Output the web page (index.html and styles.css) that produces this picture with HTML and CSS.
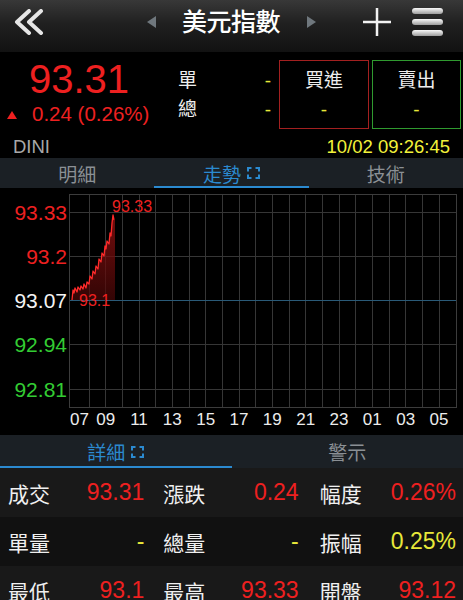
FILE: index.html
```html
<!DOCTYPE html>
<html lang="zh-Hant">
<head>
  <meta charset="UTF-8">
  <meta name="viewport" content="width=device-width, initial-scale=1.0">
  <title>美元指數</title>
  <link rel="stylesheet" href="styles.css">
</head>
<body>
  <header class="topbar">
    <svg class="back-icon" width="32" height="26" viewBox="0 0 32 26">
      <path d="M16 2L4 13L16 24M28 2L16 13L28 24"/>
    </svg>
    <div class="title-group">
      <span class="tri tri-left"></span>
      <h1 class="title">美元指數</h1>
      <span class="tri tri-right"></span>
    </div>
    <div class="actions">
      <svg class="plus-icon" width="28" height="28" viewBox="0 0 28 28">
        <path d="M14 0V28M0 14H28"/>
      </svg>
      <svg class="menu-icon" width="31" height="28" viewBox="0 0 31 28">
        <defs>
          <linearGradient id="barGrad" x1="0" y1="0" x2="0" y2="1">
            <stop offset="0" stop-color="#fafafa"/>
            <stop offset="1" stop-color="#9c9c9c"/>
          </linearGradient>
        </defs>
        <rect x="0" y="0" width="31" height="6" rx="3"/>
        <rect x="0" y="11" width="31" height="6" rx="3"/>
        <rect x="0" y="22" width="31" height="6" rx="3"/>
      </svg>
    </div>
  </header>

  <section class="quote">
    <div class="quote-main">
      <div class="price-block">
        <div class="price">93.31</div>
        <div class="change"><span class="up-tri"></span>0.24 (0.26%)</div>
      </div>
      <div class="vol-block">
        <div class="vol-row"><span>單</span><span class="dash">-</span></div>
        <div class="vol-row"><span>總</span><span class="dash">-</span></div>
      </div>
      <div class="order-box buy">
        <div>買進</div>
        <div class="dash">-</div>
      </div>
      <div class="order-box sell">
        <div>賣出</div>
        <div class="dash">-</div>
      </div>
    </div>
    <div class="quote-info">
      <span class="code">DINI</span>
      <span class="time">10/02 09:26:45</span>
    </div>
  </section>

  <nav class="tabs chart-tabs">
    <div class="tab">明細</div>
    <div class="tab active">走勢
      <svg class="expand" width="13" height="12" viewBox="0 0 13 12"><path d="M1 4.5V1H4.5M8.5 1H12V4.5M12 7.5V11H8.5M4.5 11H1V7.5"/></svg>
    </div>
    <div class="tab">技術</div>
  </nav>

  <div class="chart-wrap">
    <svg class="chart" width="463" height="247" viewBox="0 0 463 247">
      <defs>
        <linearGradient id="areaGrad" x1="0" y1="0" x2="0" y2="1">
          <stop offset="0" stop-color="#9a1212" stop-opacity="0.75"/>
          <stop offset="1" stop-color="#4a0707" stop-opacity="0.7"/>
        </linearGradient>
      </defs>
      <!-- grid -->
      <path class="grid" d="M89.5 6V219M105.5 6V219M122.5 6V219M139.5 6V219M155.5 6V219M172.5 6V219M189.5 6V219M205.5 6V219M222.5 6V219M239.5 6V219M255.5 6V219M272.5 6V219M289.5 6V219M305.5 6V219M322.5 6V219M339.5 6V219M355.5 6V219M372.5 6V219M389.5 6V219M405.5 6V219M422.5 6V219M439.5 6V219"/>
      <path class="grid" d="M69 24.5H456M69 68.5H456M69 156.5H456M69 201.5H456"/>
      <path class="base" d="M69 112.5H456"/>
      <rect class="frame" x="69.5" y="6.5" width="387" height="213"/>

      <!-- price line -->
      <path class="area" d="M72 112L73 102L74 105L75 100L77 104L78 99L80 102L81 98L83 101L84 96L86 100L87 94L89 96L90 88L92 91L93 83L95 86L96 78L98 81L99 71L101 74L102 65L104 68L105 58L106 61L107 53L109 56L110 45L111 48L112 35L113 27L114 32L115 32L115 112Z"/>
      <path class="line" d="M72 112L73 102L74 105L75 100L77 104L78 99L80 102L81 98L83 101L84 96L86 100L87 94L89 96L90 88L92 91L93 83L95 86L96 78L98 81L99 71L101 74L102 65L104 68L105 58L106 61L107 53L109 56L110 45L111 48L112 35L113 27L114 32"/>
      <text class="mark" x="112" y="24">93.33</text>
      <text class="mark" x="79" y="118">93.1</text>

      <!-- y axis -->
      <text class="ylab up" x="67" y="31.5">93.33</text>
      <text class="ylab up" x="67" y="75.5">93.2</text>
      <text class="ylab flat" x="67" y="119.5">93.07</text>
      <text class="ylab down" x="67" y="163.5">92.94</text>
      <text class="ylab down" x="67" y="208.5">92.81</text>

      <!-- x axis -->
      <text class="xlab first" x="70" y="237">07</text>
      <text class="xlab" x="105.7" y="237">09</text>
      <text class="xlab" x="139" y="237">11</text>
      <text class="xlab" x="172.3" y="237">13</text>
      <text class="xlab" x="205.7" y="237">15</text>
      <text class="xlab" x="239" y="237">17</text>
      <text class="xlab" x="272.3" y="237">19</text>
      <text class="xlab" x="305.7" y="237">21</text>
      <text class="xlab" x="339" y="237">23</text>
      <text class="xlab" x="372.3" y="237">01</text>
      <text class="xlab" x="405.7" y="237">03</text>
      <text class="xlab" x="439" y="237">05</text>
    </svg>
  </div>

  <nav class="tabs detail-tabs">
    <div class="tab active">詳細
      <svg class="expand" width="13" height="12" viewBox="0 0 13 12"><path d="M1 4.5V1H4.5M8.5 1H12V4.5M12 7.5V11H8.5M4.5 11H1V7.5"/></svg>
    </div>
    <div class="tab">警示</div>
  </nav>

  <div class="details">
    <div class="detail-row">
      <div class="cell"><span>成交</span><span class="val up">93.31</span></div>
      <div class="cell"><span>漲跌</span><span class="val up">0.24</span></div>
      <div class="cell"><span>幅度</span><span class="val up">0.26%</span></div>
    </div>
    <div class="detail-row">
      <div class="cell"><span>單量</span><span class="val hl">-</span></div>
      <div class="cell"><span>總量</span><span class="val hl">-</span></div>
      <div class="cell"><span>振幅</span><span class="val hl">0.25%</span></div>
    </div>
    <div class="detail-row">
      <div class="cell"><span>最低</span><span class="val up">93.1</span></div>
      <div class="cell"><span>最高</span><span class="val up">93.33</span></div>
      <div class="cell"><span>開盤</span><span class="val up">93.12</span></div>
    </div>
  </div>
</body>
</html>
```

FILE: styles.css
```css
* {
  box-sizing: border-box;
}

body {
  margin: 0;
  width: 463px;
  height: 600px;
  overflow: hidden;
  background: #000;
  color: #eee;
  font-family: "Liberation Sans", "Noto Sans CJK TC", sans-serif;
}

/* top bar */
.topbar {
  height: 53px;
  display: grid;
  grid-template-columns: 1fr auto 1fr;
  align-items: center;
  padding-bottom: 8px;
  background: linear-gradient(#383838 0%, #202020 45%, #121212 100%);
  border-bottom: 1px solid #000;
}

.back-icon {
  justify-self: start;
  margin-left: 13px;
}

.back-icon path {
  fill: none;
  stroke: #e6e6e6;
  stroke-width: 4;
  stroke-linecap: round;
  stroke-linejoin: round;
}

.title-group {
  display: flex;
  align-items: center;
}

.tri {
  width: 0;
  height: 0;
  border-top: 6.5px solid transparent;
  border-bottom: 6.5px solid transparent;
}

.tri-left {
  border-right: 9px solid #6f777d;
  margin-right: 26px;
}

.tri-right {
  border-left: 9px solid #6f777d;
  margin-left: 27px;
}

.title {
  margin: 0;
  font-size: 25px;
  font-weight: 500;
  line-height: 30px;
  letter-spacing: -0.5px;
  color: #fff;
}

.actions {
  justify-self: end;
  display: flex;
  align-items: center;
  gap: 21px;
  margin-right: 20px;
}

.plus-icon path {
  stroke: #f2f2f2;
  stroke-width: 2.5;
}

.menu-icon rect {
  fill: url(#barGrad);
}

/* quote */
.quote-main {
  display: flex;
  height: 76px;
  padding-top: 7px;
}

.price-block {
  width: 158px;
  color: #ee2020;
}

.price {
  text-align: center;
  font-size: 40px;
  line-height: 38px;
}

.change {
  margin-top: 4px;
  padding-left: 7px;
  font-size: 20.5px;
  line-height: 24px;
  white-space: nowrap;
}

.up-tri {
  display: inline-block;
  width: 0;
  height: 0;
  border-left: 5px solid transparent;
  border-right: 5px solid transparent;
  border-bottom: 8px solid #ee2020;
  margin-right: 15px;
  vertical-align: 2px;
}

.vol-block {
  width: 93px;
  margin-left: 20px;
  padding-top: 6px;
}

.vol-row {
  display: flex;
  justify-content: space-between;
  height: 29px;
  line-height: 29px;
  font-size: 19px;
}

.dash {
  color: #e8e83a;
}

.order-box {
  height: 69px;
  padding-top: 5px;
  text-align: center;
  font-size: 19px;
}

.order-box div {
  height: 29px;
  line-height: 29px;
}

.order-box.buy {
  width: 90px;
  margin-left: 8px;
  border: 1px solid #a32020;
}

.order-box.sell {
  width: 89px;
  margin-left: 3px;
  border: 1px solid #2f9a2f;
}

.quote-info {
  height: 29px;
  display: flex;
  justify-content: space-between;
  padding: 7px 13px 0;
  font-size: 18.5px;
  line-height: 22px;
}

.code {
  color: #a8a8a8;
}

.time {
  color: #f2f23a;
}

/* tabs */
.tabs {
  display: flex;
  background: #1b2025;
}

.chart-tabs {
  height: 30px;
}

.detail-tabs {
  height: 33px;
}

.tab {
  flex: 1;
  display: flex;
  align-items: center;
  justify-content: center;
  gap: 6px;
  padding-top: 2px;
  font-size: 19px;
  color: #8b9095;
  border-bottom: 2px solid transparent;
}

.tab.active {
  color: #2b8ad0;
  border-bottom-color: #2b8ad0;
}

.expand path {
  fill: none;
  stroke: currentColor;
  stroke-width: 2;
}

/* chart */
.chart-wrap {
  height: 247px;
  background: #000;
}

.chart {
  display: block;
}

.grid {
  fill: none;
  stroke: #363636;
  stroke-width: 1;
}

.base {
  stroke: #2a5a78;
  stroke-width: 1;
}

.frame {
  fill: none;
  stroke: #3c3c3c;
}

.area {
  fill: url(#areaGrad);
}

.line {
  fill: none;
  stroke: #ff2a2a;
  stroke-width: 1.3;
  stroke-linejoin: round;
}

.mark {
  font-size: 16px;
  fill: #ee2020;
}

.ylab {
  font-size: 21px;
  text-anchor: end;
}

.ylab.up {
  fill: #ee2020;
}

.ylab.flat {
  fill: #f4f4f4;
}

.ylab.down {
  fill: #33cc33;
}

.xlab {
  font-size: 17px;
  fill: #ececec;
  text-anchor: middle;
}

.xlab.first {
  text-anchor: start;
}

/* detail rows */
.detail-row {
  display: grid;
  grid-template-columns: repeat(3, 1fr);
  height: 49px;
  align-items: center;
  background: #191919;
}

.detail-row:nth-child(even) {
  background: #111;
}

.cell {
  display: flex;
  justify-content: space-between;
  align-items: center;
  padding: 0 10px 0 8px;
  font-size: 21px;
  color: #f0f0f0;
}

.cell:nth-child(2) {
  padding-left: 9px;
}

.cell:nth-child(3) {
  padding: 0 7px 0 11px;
}

.val {
  font-size: 23px;
}

.val.up {
  color: #ee2020;
}

.val.hl {
  color: #e8e83a;
}
```
